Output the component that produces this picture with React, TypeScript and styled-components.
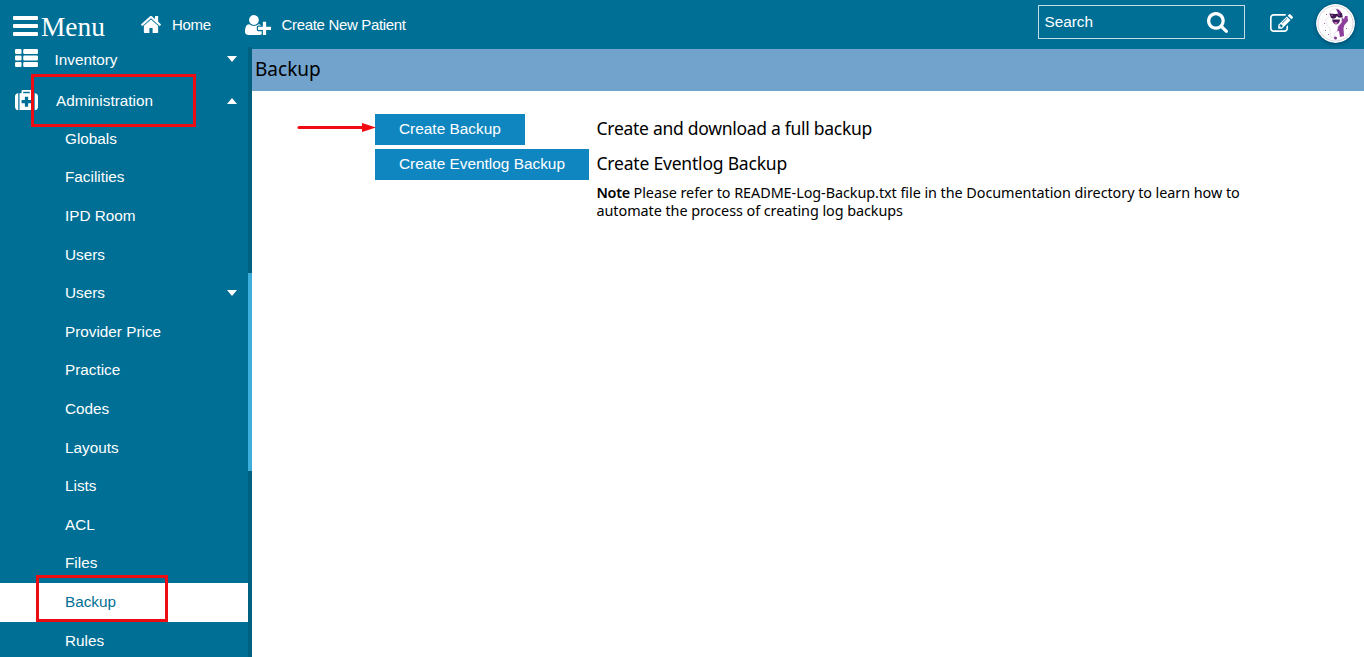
import React from 'react';
import styled, { createGlobalStyle } from 'styled-components';

const GlobalStyle = createGlobalStyle`
  * { box-sizing: border-box; }
  html, body { margin: 0; padding: 0; overflow: hidden; }
  body { font-family: "Liberation Sans", Arial, sans-serif; font-size: 15px; color: #fff; background: #fff; }
`;

const Page = styled.div`
  position: relative;
  display: flex;
  flex-direction: column;
  width: 1364px;
  height: 657px;
  overflow: hidden;
`;

const Header = styled.header`
  display: flex;
  align-items: flex-start;
  flex: none;
  height: 49px;
  padding-left: 13px;
  background: #006f96;
`;

const MenuToggle = styled.div`
  display: flex;
  width: 128px;
  gap: 3px;
  font: 27.4px/30px "Liberation Serif", "Times New Roman", serif;
`;

const Bars = styled.span`
  display: flex;
  flex-direction: column;
  gap: 4px;
  width: 25px;
  padding-top: 16px;
`;

const Bar = styled.i`
  height: 4px;
  border-radius: 1px;
  background: #fff;
`;

const MenuLabel = styled.span`
  padding-top: 12px;
`;

const NavLink = styled.a<{ $width: number; $gap: number }>`
  display: flex;
  align-items: center;
  width: ${p => p.$width}px;
  height: 49px;
  gap: ${p => p.$gap}px;
  font-size: 15px;
  letter-spacing: -0.33px;
  white-space: nowrap;
`;

const HeaderTools = styled.div`
  display: flex;
  align-items: flex-start;
  margin-left: auto;
  padding-right: 9px;
`;

const SearchBox = styled.div`
  display: flex;
  justify-content: space-between;
  width: 207px;
  height: 34px;
  margin-top: 5px;
  padding: 6px 16px 0 6px;
  border: 1px solid #c3dde7;
  font-size: 15.3px;
  line-height: 20px;
`;

const EditButton = styled.div`
  padding: 14px 23.5px 0 25px;
`;

const Avatar = styled.div`
  padding-top: 4px;
  svg { display: block; border-radius: 50%; box-shadow: 0 1px 4px rgba(0, 20, 50, 0.45); }
`;

const Glyph = styled.svg`
  display: block;
  flex: none;
  fill: #fff;
`;

const Body = styled.div`
  display: flex;
  flex: 1;
  min-height: 0;
`;

const Sidebar = styled.nav`
  display: flex;
  flex: none;
  width: 252px;
  font-size: 15.3px;
  background: #006f96;
`;

const MenuList = styled.div`
  width: 248px;
`;

const Group = styled.div<{ $height: number; $indent: number; $shift: number }>`
  display: flex;
  align-items: center;
  height: ${p => p.$height}px;
  padding: 0 11px 0 15px;
  margin-top: ${p => p.$shift}px;
  span { margin-left: ${p => p.$indent}px; flex: 1; padding-top: 2px; line-height: 18px; }
`;

const GroupIcon = styled.div<{ $lift: number }>`
  padding-bottom: ${p => p.$lift}px;
`;

const Item = styled.div<{ $active?: boolean }>`
  display: flex;
  align-items: center;
  justify-content: space-between;
  height: 38.6px;
  padding: 0 11px 1px 65px;
  color: ${p => (p.$active ? '#006f96' : '#fff')};
  background: ${p => (p.$active ? '#fff' : 'transparent')};
`;

const Caret = styled.i<{ $up?: boolean }>`
  border: 5.5px solid transparent;
  border-top: ${p => (p.$up ? '0' : '6px solid #fff')};
  border-bottom: ${p => (p.$up ? '6px solid #fff' : '0')};
  margin-top: ${p => (p.$up ? '1px' : '0')};
`;

const ScrollTrack = styled.div`
  width: 4px;
  margin-top: -2px;
  padding-top: 226px;
  background: #006080;
`;

const ScrollThumb = styled.div`
  height: 198px;
  background: #3eaedc;
`;

const Content = styled.main`
  flex: 1;
  color: #000;
  font-family: "Noto Sans", "Open Sans", sans-serif;
`;

const TitleBar = styled.h1`
  height: 42px;
  margin: 0;
  padding: 0 3px;
  background: #72a3cc;
  font-size: 19px;
  font-weight: 400;
  line-height: 41px;
  letter-spacing: 0;
`;

const Actions = styled.section`
  display: grid;
  grid-template-columns: 214px 660px;
  grid-template-rows: 31px 31px auto;
  gap: 4px 7.5px;
  padding: 23px 0 0 123px;
`;

const ActionButton = styled.button`
  justify-self: start;
  padding: 0 24px 2px;
  border: 0;
  color: #fff;
  background: #0f86c0;
  font: 15.4px "Liberation Sans", Arial, sans-serif;
  white-space: nowrap;
`;

const Description = styled.div<{ $spacing: number }>`
  font-size: 17.5px;
  line-height: 29px;
  letter-spacing: ${p => p.$spacing}px;
  white-space: nowrap;
`;

const Note = styled.p`
  grid-column: 2;
  margin: 0;
  font-size: 14.4px;
  line-height: 18px;
  letter-spacing: -0.055px;
  white-space: nowrap;
  b { font-weight: 600; letter-spacing: -0.3px; }
`;

const Marker = styled.div<{ $x: number; $y: number; $w: number; $h: number }>`
  position: absolute;
  left: ${p => p.$x}px;
  top: ${p => p.$y}px;
  width: ${p => p.$w}px;
  height: ${p => p.$h}px;
  border: 3px solid #ec0c12;
`;

const Arrow = styled.svg`
  position: absolute;
  left: 297px;
  top: 121px;
`;

const paths = {
  home: 'M1472 992v480q0 26-19 45t-45 19h-384v-384h-256v384h-384q-26 0-45-19t-19-45v-480q0-1 .5-3t.5-3l575-474 575 474q1 2 1 6zm223-69l-62 74q-8 9-21 11h-3q-13 0-21-7l-692-577-692 577q-12 8-24 7-13-2-21-11l-62-74q-8-10-7-23.5t11-21.5l719-599q32-26 76-26t76 26l244 204v-195q0-14 9-23t23-9h192q14 0 23 9t9 23v408l219 182q10 8 11 21.5t-7 23.5z',
  userPlus: 'M704 896q-159 0-271.500-112.500t-112.500-271.500 112.500-271.500 271.500-112.500 271.500 112.500 112.500 271.500-112.500 271.500-271.500 112.500zm960 128h352q13 0 22.500 9.500t9.500 22.500v192q0 13-9.500 22.500t-22.500 9.500h-352v352q0 13-9.500 22.500t-22.500 9.500h-192q-13 0-22.500-9.500t-9.500-22.500v-352h-352q-13 0-22.500-9.500t-9.500-22.500v-192q0-13 9.500-22.500t22.500-9.500h352v-352q0-13 9.500-22.500t22.500-9.500h192q13 0 22.500 9.500t9.500 22.500v352zm-736 224q0 52 38 90t90 38h256v238q-68 50-171 50h-874q-121 0-194-69t-73-190q0-53 3.500-103.500t14-109 26.500-108.500 43-97.500 62-81 85.500-53.500 111.500-20q19 0 39 17 79 61 154.500 91.500t164.500 30.500 164.500-30.500 154.500-91.500q20-17 39-17 132 0 217 96h-223q-52 0-90 38t-38 90v192z',
  search: 'M1216 832q0-185-131.500-316.500t-316.500-131.500-316.500 131.500-131.500 316.500 131.500 316.500 316.500 131.500 316.500-131.500 131.500-316.500zm512 832q0 52-38 90t-90 38q-54 0-90-38l-343-343q-179 124-399 124-143 0-273.500-55.500t-225-150-150-225-55.500-273.500 55.500-273.500 150-225 225-150 273.500-55.500 273.500 55.500 225 150 150 225 55.500 273.500q0 220-124 399l343 343q37 37 37 90z',
  edit: 'M888 1184l116-116-152-152-116 116v56h96v96h56zm440-720q-16-16-33 1l-350 350q-17 17-1 33t33-1l350-350q17-17 1-33zm80 594v190q0 119-84.500 203.500t-203.500 84.500h-832q-119 0-203.500-84.500t-84.500-203.500v-832q0-119 84.500-203.500t203.500-84.500h832q63 0 117 25 15 7 18 23 3 17-9 29l-49 49q-14 14-32 8-23-6-45-6h-832q-66 0-113 47t-47 113v832q0 66 47 113t113 47h832q66 0 113-47t47-113v-126q0-13 9-22l64-64q15-15 35-7t20 29zm-96-738l288 288-672 672h-288v-288zm444 132l-92 92-288-288 92-92q28-28 68-28t68 28l152 152q28 28 28 68t-28 68z',
  medkit: 'M1280 1120v-192q0-14-9-23t-23-9h-224v-224q0-14-9-23t-23-9h-192q-14 0-23 9t-9 23v224h-224q-14 0-23 9t-9 23v192q0 14 9 23t23 9h224v224q0 14 9 23t23 9h192q14 0 23-9t9-23v-224h224q14 0 23-9t9-23zM640 384h512v-128h-512v128zM256 384v1280h-32q-92 0-158-66t-66-158v-832q0-92 66-158t158-66h32zM1440 384v1280h-1088v-1280h160v-160q0-40 28-68t68-28h576q40 0 68 28t28 68v160h160zM1792 608v832q0 92-66 158t-158 66h-32v-1280h32q92 0 158 66t66 158z',
  list: 'M96 128h320a96 96 0 0 1 96 96v192a96 96 0 0 1-96 96h-320a96 96 0 0 1-96-96v-192a96 96 0 0 1 96-96zM96 640h320a96 96 0 0 1 96 96v192a96 96 0 0 1-96 96h-320a96 96 0 0 1-96-96v-192a96 96 0 0 1 96-96zM96 1152h320a96 96 0 0 1 96 96v192a96 96 0 0 1-96 96h-320a96 96 0 0 1-96-96v-192a96 96 0 0 1 96-96zM736 128h960a96 96 0 0 1 96 96v192a96 96 0 0 1-96 96h-960a96 96 0 0 1-96-96v-192a96 96 0 0 1 96-96zM736 640h960a96 96 0 0 1 96 96v192a96 96 0 0 1-96 96h-960a96 96 0 0 1-96-96v-192a96 96 0 0 1 96-96zM736 1152h960a96 96 0 0 1 96 96v192a96 96 0 0 1-96 96h-960a96 96 0 0 1-96-96v-192a96 96 0 0 1 96-96z',
};

type IconProps = { name: keyof typeof paths; box: string; width: number; height: number };

const Icon = ({ name, box, width, height }: IconProps) => (
  <Glyph viewBox={box} width={width} height={height} preserveAspectRatio="none">
    <path d={paths[name]} fillRule={name === 'medkit' ? 'evenodd' : 'nonzero'} />
  </Glyph>
);

const items = [
  'Globals', 'Facilities', 'IPD Room', 'Users', 'Users', 'Provider Price', 'Practice',
  'Codes', 'Layouts', 'Lists', 'ACL', 'Files', 'Backup', 'Rules',
];

const AvatarArt = () => (
  <svg width="39" height="39" viewBox="0 0 39 39">
    <circle cx="19.500" cy="19.500" r="19.500" fill="#fff" />
    <circle cx="19.500" cy="19.500" r="17.500" fill="none" stroke="#c3bdcf" strokeWidth="0.600" />
    <path d="M22 7q4 1 4.500 7l1.500 1 1-3h2.500l.5 5-3.500 4-1 3 .5 8-4 1-1-6h-1.500l-.5 1-1-6z" fill="#8e3f9c" />
    <path d="M13 12q0-7 7-7.500 5 .5 6 6l-.5 8-3.500 4-1 5-2 1-.5 4.500-4 .5-.5-9-3-3-1.500-6 2-1z" fill="#fff" stroke="#ddd3e3" strokeWidth="0.600" />
    <path d="M20 5q5 0 6.500 8l-3-1z" fill="#6f2587" />
    <path d="M13.500 9.500l6 .5 6.500-1 .5 4q-4 2-5.500-1-2 4-6 2z" fill="#3d1850" />
    <path d="M15 10.500l2 .5-1 1.500zM22 10.500h2l-1 1.500z" fill="#b866ba" />
    <path d="M16 15.500h8q-.5 4.500-4 5-3-.5-4-5z" fill="#4a1b5c" />
    <path d="M17.500 18.500q2.500-1 4.500 0l-2 2z" fill="#c675b8" />
    <circle cx="19.500" cy="34" r="1.500" fill="#7c398e" />
    <path d="M8 19h1v1H8zM10 10h1v1h-1zM30 24h1v1h-1zM9 26h1v1H9zM12 30h1v1h-1z" fill="#a867ad" />
  </svg>
);

export default function App() {
  return (
    <Page>
      <GlobalStyle />
      <Header>
        <MenuToggle>
          <Bars><Bar /><Bar /><Bar /></Bars>
          <MenuLabel>Menu</MenuLabel>
        </MenuToggle>
        <NavLink $width={104} $gap={11}>
          <Icon name="home" box="89 256 1614 1280" width={20} height={17} />
          Home
        </NavLink>
        <NavLink $width={170} $gap={10.5}>
          <Icon name="userPlus" box="0 128 2048 1536" width={26} height={20} />
          Create New Patient
        </NavLink>
        <HeaderTools>
          <SearchBox>
            Search
            <Icon name="search" box="64 128 1664 1664" width={21} height={21} />
          </SearchBox>
          <EditButton><Icon name="edit" box="0 128 1792 1408" width={23} height={18} /></EditButton>
          <Avatar><AvatarArt /></Avatar>
        </HeaderTools>
      </Header>
      <Body>
        <Sidebar>
          <MenuList>
            <Group $height={24} $indent={16.5} $shift={-2}>
              <GroupIcon $lift={3}>
                <Icon name="list" box="0 128 1792 1408" width={23} height={18} />
              </GroupIcon>
              <span>Inventory</span>
              <Caret />
            </Group>
            <Group $height={40} $indent={18} $shift={9}>
              <GroupIcon $lift={0}>
                <Icon name="medkit" box="0 128 1792 1536" width={23} height={20} />
              </GroupIcon>
              <span>Administration</span>
              <Caret $up />
            </Group>
            {items.map((label, i) => (
              <Item key={i} $active={label === 'Backup'}>
                {label}
                {i === 4 && <Caret />}
              </Item>
            ))}
          </MenuList>
          <ScrollTrack><ScrollThumb /></ScrollTrack>
        </Sidebar>
        <Content>
          <TitleBar>Backup</TitleBar>
          <Actions>
            <ActionButton>Create Backup</ActionButton>
            <Description $spacing={-0.28}>Create and download a full backup</Description>
            <ActionButton>Create Eventlog Backup</ActionButton>
            <Description $spacing={-0.2}>Create Eventlog Backup</Description>
            <Note>
              <b>Note</b> Please refer to README-Log-Backup.txt file in the Documentation directory to learn how to
              <br />
              automate the process of creating log backups
            </Note>
          </Actions>
        </Content>
      </Body>
      <Marker $x={31} $y={74} $w={165} $h={53} />
      <Marker $x={36} $y={575} $w={132} $h={47} />
      <Arrow width="80" height="13" viewBox="0 0 80 13">
        <path d="M2 6.500h66" stroke="#f00a12" strokeWidth="3" strokeLinecap="round" />
        <path d="M65 2l14 4.500-14 4.500z" fill="#f00a12" />
      </Arrow>
    </Page>
  );
}
